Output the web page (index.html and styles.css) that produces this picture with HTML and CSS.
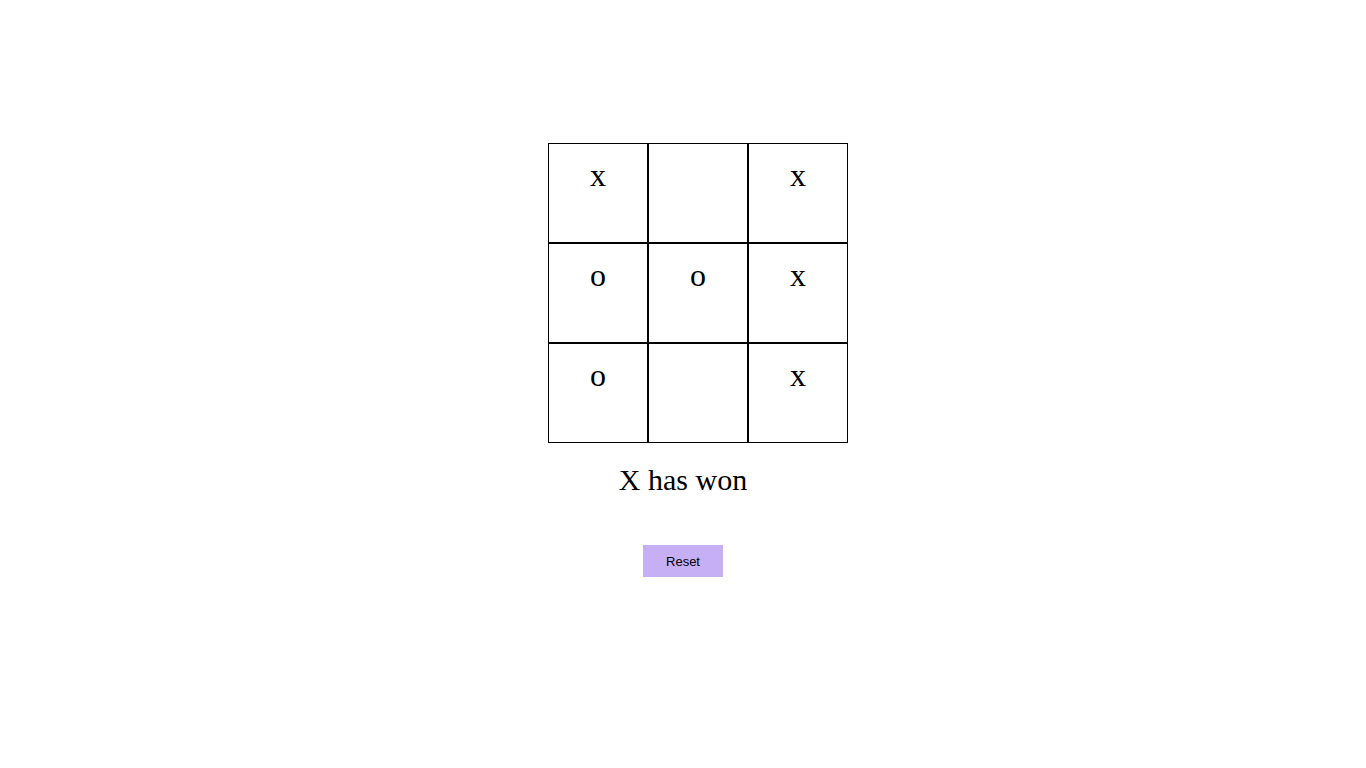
FILE: index.html
```html
<!DOCTYPE html>
<html>
<head>
<meta charset="utf-8">
<link rel="stylesheet" href="styles.css">
</head>
<body>
<div class="app">
  <div class="board">
    <div class="cell">x</div>
    <div class="cell"></div>
    <div class="cell">x</div>
    <div class="cell">o</div>
    <div class="cell">o</div>
    <div class="cell">x</div>
    <div class="cell">o</div>
    <div class="cell"></div>
    <div class="cell">x</div>
  </div>
  <div class="status">X has won</div>
  <button class="reset">Reset</button>
</div>
</body>
</html>
```
FILE: styles.css
```css
body {
  margin: 0;
  background: #fff;
  font-family: "Liberation Serif", serif;
}
.app {
  display: flex;
  flex-direction: column;
  align-items: center;
  padding-top: 143px;
}
.board {
  display: grid;
  grid-template-columns: repeat(3, 100px);
  grid-template-rows: repeat(3, 100px);
  margin-left: 30px;
}
.cell {
  box-sizing: border-box;
  border: 1px solid #000;
  text-align: center;
  font-size: 32px;
  line-height: 1;
  padding-top: 15px;
  color: #000;
}
.status {
  font-size: 30px;
  margin-top: 19px;
  line-height: 35px;
}
.reset {
  margin-top: 48px;
  width: 80px;
  height: 32px;
  border: none;
  background: #c6aff5;
  font-family: "Liberation Sans", sans-serif;
  font-size: 13px;
  color: #000;
  padding: 0;
}
```
